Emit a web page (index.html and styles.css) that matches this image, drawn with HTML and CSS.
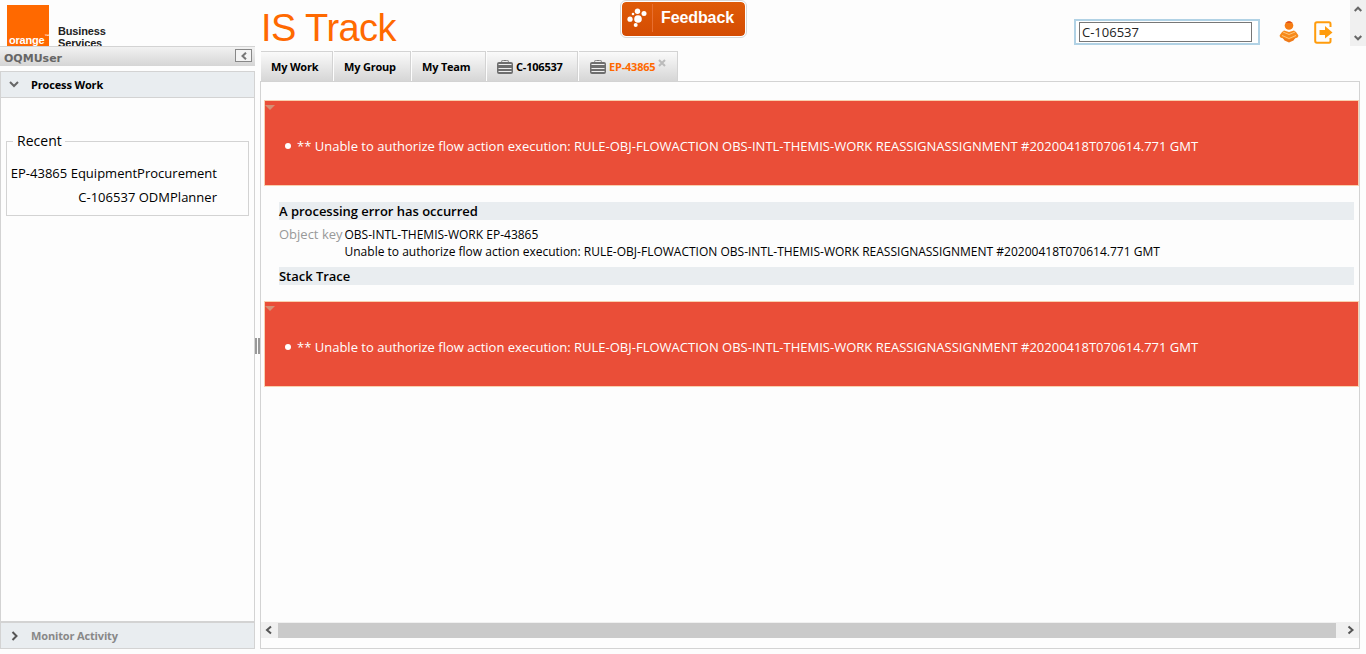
FILE: index.html
```html
<!DOCTYPE html>
<html lang="en">
<head>
<meta charset="utf-8">
<title>IS Track</title>
<link rel="stylesheet" href="styles.css">
</head>
<body>
<div class="app">
  <aside class="sidebar">
    <div class="brand">
      <div class="brand-mark"><span>orange</span><sup>™</sup></div>
      <div class="brand-name">Business<br>Services</div>
    </div>
    <div class="user-bar">
      <span>OQMUser</span>
      <button class="collapse" aria-label="Collapse"><svg width="6" height="8" viewBox="0 0 6 8"><path d="M5 .7 1.5 4 5 7.3" fill="none" stroke="#777" stroke-width="2"/></svg></button>
    </div>
    <nav class="accordion">
      <div class="section-head open">
        <svg width="10" height="10" viewBox="0 0 10 10"><path d="M1 2 5 6 9 2" fill="none" stroke="#666" stroke-width="2"/></svg>
        <span>Process Work</span>
      </div>
      <div class="section-body">
        <fieldset class="recent">
          <legend>Recent</legend>
          <div>EP-43865 EquipmentProcurement</div>
          <div>C-106537 ODMPlanner</div>
        </fieldset>
      </div>
      <div class="section-head closed">
        <svg width="10" height="10" viewBox="0 0 10 10"><path d="M3.5 1 7.5 5 3.5 9" fill="none" stroke="#555" stroke-width="2"/></svg>
        <span>Monitor Activity</span>
      </div>
    </nav>
  </aside>
  <div class="splitter"><i></i><i></i></div>
  <main class="content">
    <header class="top">
      <h1>IS Track</h1>
      <button class="feedback">
        <svg width="20" height="20" viewBox="0 0 20 20" fill="#fff"><circle cx="10.5" cy="3.2" r="2.7"/><circle cx="17" cy="5.5" r="2.5"/><circle cx="6" cy="6" r="1.3"/><circle cx="3" cy="11.2" r="2.6"/><circle cx="11" cy="11" r="3.8"/><circle cx="8.7" cy="17" r="2"/></svg>
        <span>Feedback</span>
      </button>
      <div class="search"><input type="text" value="C-106537" aria-label="Search"></div>
      <svg class="user-icon" width="20" height="22" viewBox="0 0 20 22"><circle cx="10" cy="4.5" r="4.3" fill="#f57c14"/><path d="M6.5 1.8Q10-1.2 13.5 1.8Z" fill="#d9401a"/><path d="M5 9.5 10 11 15 9.5 17 11 19.3 14.2Q19.6 16.5 17 17L10 20 3 17Q.4 16.5 .7 14.2L3 11Z" fill="#f78a1c"/><path d="M4 11 10 13.5 16 11M3 14.5 10 17.5 17 14.5" fill="none" stroke="#ffc477"/><path d="M3.5 16.5 10 19 16.5 16.5 14.5 19.5 10 21.5 5.5 19.5Z" fill="#ef7a18"/></svg>
      <svg class="exit-icon" width="20" height="23" viewBox="0 0 20 23"><path d="M16.5 6V3Q16.5 1.2 15 1.2H3Q1.2 1.2 1.2 3V20Q1.2 21.8 3 21.8H15Q16.5 21.8 16.5 20V17" fill="none" stroke="#ff9c0c" stroke-width="2"/><path d="M5.5 9H11V5L18.5 11.5 11 17.5V14H5.5Z" fill="#ff9c0c"/></svg>
    </header>
    <div class="tabs">
      <div class="tab w1"><span>My Work</span></div>
      <div class="tab w2"><span>My Group</span></div>
      <div class="tab w3"><span>My Team</span></div>
      <div class="tab w4"><svg class="case" width="16" height="14" viewBox="0 0 16 14"><path d="M4 1.5Q5 .5 6.5 .5H9.5Q11 .5 12 1.5" fill="none" stroke="#777"/><rect y="2" width="16" height="12" rx="2" fill="#6e6e6e"/><path d="M1.5 4.5H14.5M1.5 8.5H14.5M1.5 11.5H14.5" stroke="#eee"/></svg><span>C-106537</span></div>
      <div class="tab w5 active"><svg class="case" width="16" height="14" viewBox="0 0 16 14"><path d="M4 1.5Q5 .5 6.5 .5H9.5Q11 .5 12 1.5" fill="none" stroke="#777"/><rect y="2" width="16" height="12" rx="2" fill="#6e6e6e"/><path d="M1.5 4.5H14.5M1.5 8.5H14.5M1.5 11.5H14.5" stroke="#eee"/></svg><span>EP-43865</span><svg class="close" width="8" height="8" viewBox="0 0 8 8"><path d="M1 1 7 7M7 1 1 7" stroke="#bbb" stroke-width="2"/></svg></div>
    </div>
    <section class="panel">
      <div class="alert"><i class="fold"></i><i class="dot"></i><span>** Unable to authorize flow action execution: RULE-OBJ-FLOWACTION OBS-INTL-THEMIS-WORK REASSIGNASSIGNMENT #20200418T070614.771 GMT</span></div>
      <div class="details">
        <h2 class="error-title">A processing error has occurred</h2>
        <dl>
          <dt>Object key</dt>
          <dd><div class="key">OBS-INTL-THEMIS-WORK EP-43865</div><div class="message">Unable to authorize flow action execution: RULE-OBJ-FLOWACTION OBS-INTL-THEMIS-WORK REASSIGNASSIGNMENT #20200418T070614.771 GMT</div></dd>
        </dl>
        <h2>Stack Trace</h2>
      </div>
      <div class="alert"><i class="fold"></i><i class="dot"></i><span>** Unable to authorize flow action execution: RULE-OBJ-FLOWACTION OBS-INTL-THEMIS-WORK REASSIGNASSIGNMENT #20200418T070614.771 GMT</span></div>
      <div class="scroll-x">
        <svg width="17" height="10" viewBox="0 0 17 10"><path d="M10 1.5 6 5 10 8.5" fill="none" stroke="#555" stroke-width="2"/></svg>
        <div class="thumb"></div>
        <svg width="23" height="10" viewBox="0 0 23 10"><path d="M12.5 1.5 16.5 5 12.5 8.5" fill="none" stroke="#555" stroke-width="2"/></svg>
      </div>
    </section>
  </main>
  <div class="scroll-y">
    <svg width="8" height="6" viewBox="0 0 8 6"><path d="M.7 5 4 1.7 7.3 5" fill="none" stroke="#666" stroke-width="2"/></svg>
    <svg width="8" height="6" viewBox="0 0 8 6"><path d="M.7 1 4 4.3 7.3 1" fill="none" stroke="#666" stroke-width="2"/></svg>
  </div>
</div>
</body>
</html>
```
FILE: styles.css
```css
* { box-sizing: border-box; }
body { margin: 0; background: #fdfdfd; color: #000; font: 13px/18px "Open Sans", "Noto Sans", sans-serif; overflow: hidden; }
button { padding: 0; font: inherit; }
svg { display: block; flex: none; }
.app { display: grid; grid-template-columns: 255px 5px 1100px 6px; height: 654px; position: relative; }
.sidebar { display: flex; flex-direction: column; height: 649px; }
.brand { height: 46px; flex: none; display: flex; overflow: hidden; padding: 5px 0 0 7px; gap: 9px; }
.brand-mark { width: 42px; height: 42px; flex: none; background: #ff6900; color: #fff; display: flex; align-items: flex-start; padding: 27px 0 0 2px; font: bold 11px/16px "Liberation Sans", sans-serif; letter-spacing: -.2px; }
.brand-mark sup { font-size: 5px; line-height: 9px; }
.brand-name { padding-top: 20px; color: #222; font: bold 11px/12px "Liberation Sans", sans-serif; letter-spacing: -.15px; }
.user-bar { height: 20px; flex: none; border-top: 1px solid #d3d3d3; background: linear-gradient(#f2f2f2, #d5d5d5); display: flex; justify-content: space-between; padding: 2px 3px 0 4px; color: #666; font: bold 11px/20px "DejaVu Sans", sans-serif; }
.collapse { width: 17px; height: 13px; border: 1px solid #888; background: #f4f4f4; display: flex; align-items: center; justify-content: center; padding-left: 1px; }
.accordion { margin-top: 5px; flex: 1; border: 1px solid #d3d3d3; display: flex; flex-direction: column; }
.section-head { display: flex; align-items: center; height: 26px; flex: none; background: #e9edf0; padding-left: 8px; gap: 12px; color: #000; font-weight: bold; font-size: 11px; letter-spacing: -.15px; }
.open { border-bottom: 1px solid #d3d3d3; }
.closed { height: 27px; border-top: 2px solid #d3d3d3; color: #888; }
.section-body { flex: 1; padding: 34px 5px 0; }
.recent { margin: 0; border: 1px solid #d3d3d3; height: 84px; padding: 11px 31px 0 0; text-align: right; white-space: nowrap; line-height: 24px; letter-spacing: .015px; }
.recent legend { text-align: left; margin-left: 6px; padding: 0 3px 0 4px; line-height: 18px; font-size: 14px; }
.splitter { display: flex; justify-content: center; gap: 1px; padding-top: 338px; }
.splitter i { width: 2px; height: 16px; background: #999; }
.content { height: 649px; display: flex; flex-direction: column; }
.top { height: 51px; flex: none; display: flex; align-items: flex-start; }
h1 { margin: 7px 0 0 1px; width: 359px; color: #ff6900; font: 38px/42px "Liberation Sans", sans-serif; letter-spacing: -.55px; }
.feedback { width: 127px; height: 38px; border: 2px solid #fff; outline: 1px solid #d8d8d8; outline-offset: -1px; border-radius: 6px; background: linear-gradient(#df5b08, #d44c03); background-clip: padding-box; display: flex; align-items: center; padding: 0 0 2px 5px; color: #fff; font: bold 16px/20px "Liberation Sans", sans-serif; letter-spacing: -.1px; }
.feedback span { margin-left: 5px; padding-left: 8px; border-left: 1px solid #e86f30; line-height: 28px; }
.search { margin: 19px 0 0 327px; width: 186px; height: 26px; border: 2px solid #b1d2e5; padding: 1px 5px 1px 3px; background: #fff; }
.search input { display: block; width: 173px; height: 20px; border: 1px solid #777; padding: 0 2px; background: #fff; color: #222; font: 13px/18px "Open Sans", sans-serif; }
.user-icon { margin: 21px 0 0 19px; }
.exit-icon { margin: 21px 0 0 15px; }
.tabs { display: flex; gap: 1px; height: 30px; flex: none; padding-left: 1px; }
.tab { height: 30px; border-top: 1px solid #d3d3d3; border-right: 1px solid #d3d3d3; background: linear-gradient(#fafafa, #d6d6d6); display: flex; align-items: center; padding: 0 0 0 10px; color: #000; font-weight: bold; font-size: 11px; gap: 3px; white-space: nowrap; letter-spacing: -.2px; }
.w1 { width: 72px; } .w2 { width: 77px; } .w3 { width: 74px; } .w4 { width: 91px; } .w5 { width: 99px; padding-left: 11px; }
.active { color: #ff6900; }
.close { margin-top: -8px; }
.panel { flex: 1; border: 1px solid #d3d3d3; padding: 18px 0 9px 3px; display: flex; flex-direction: column; }
.alert { height: 86px; flex: none; border: 1px solid #f9d0ae; background: #ea4e38; color: #fff; display: flex; align-items: center; position: relative; padding: 6px 0 0 20px; white-space: nowrap; letter-spacing: .007px; }
.dot { width: 6px; height: 6px; border-radius: 50%; background: #fff; margin-right: 6px; }
.fold { position: absolute; left: 0; top: 4px; border: 5px solid transparent; border-top-color: #d58f74; border-bottom: 0; }
.details { height: 115px; flex: none; padding: 16px 5px 0 15px; }
h2 { margin: 0; height: 18px; background: #e9edf0; font-size: 13px; line-height: 18px; font-weight: 600; letter-spacing: -.03px; }
dl { margin: 0; height: 47px; padding-top: 6px; display: flex; white-space: nowrap; }
dt { width: 65.5px; color: #999; line-height: 17px; }
dd { margin: 0; font-size: 12px; line-height: 17px; letter-spacing: .005px; }
.scroll-x { height: 16px; margin: auto 0 0 -3px; display: flex; align-items: center; background: #f0f0f0; position: relative; top: -1px; }
.thumb { flex: 1; height: 15px; background: #cacaca; }
.scroll-y { position: absolute; right: 0; top: 0; width: 16px; height: 46px; background: #f0f0f0; display: flex; flex-direction: column; align-items: center; justify-content: space-between; padding: 6px 0 5px; }
```
